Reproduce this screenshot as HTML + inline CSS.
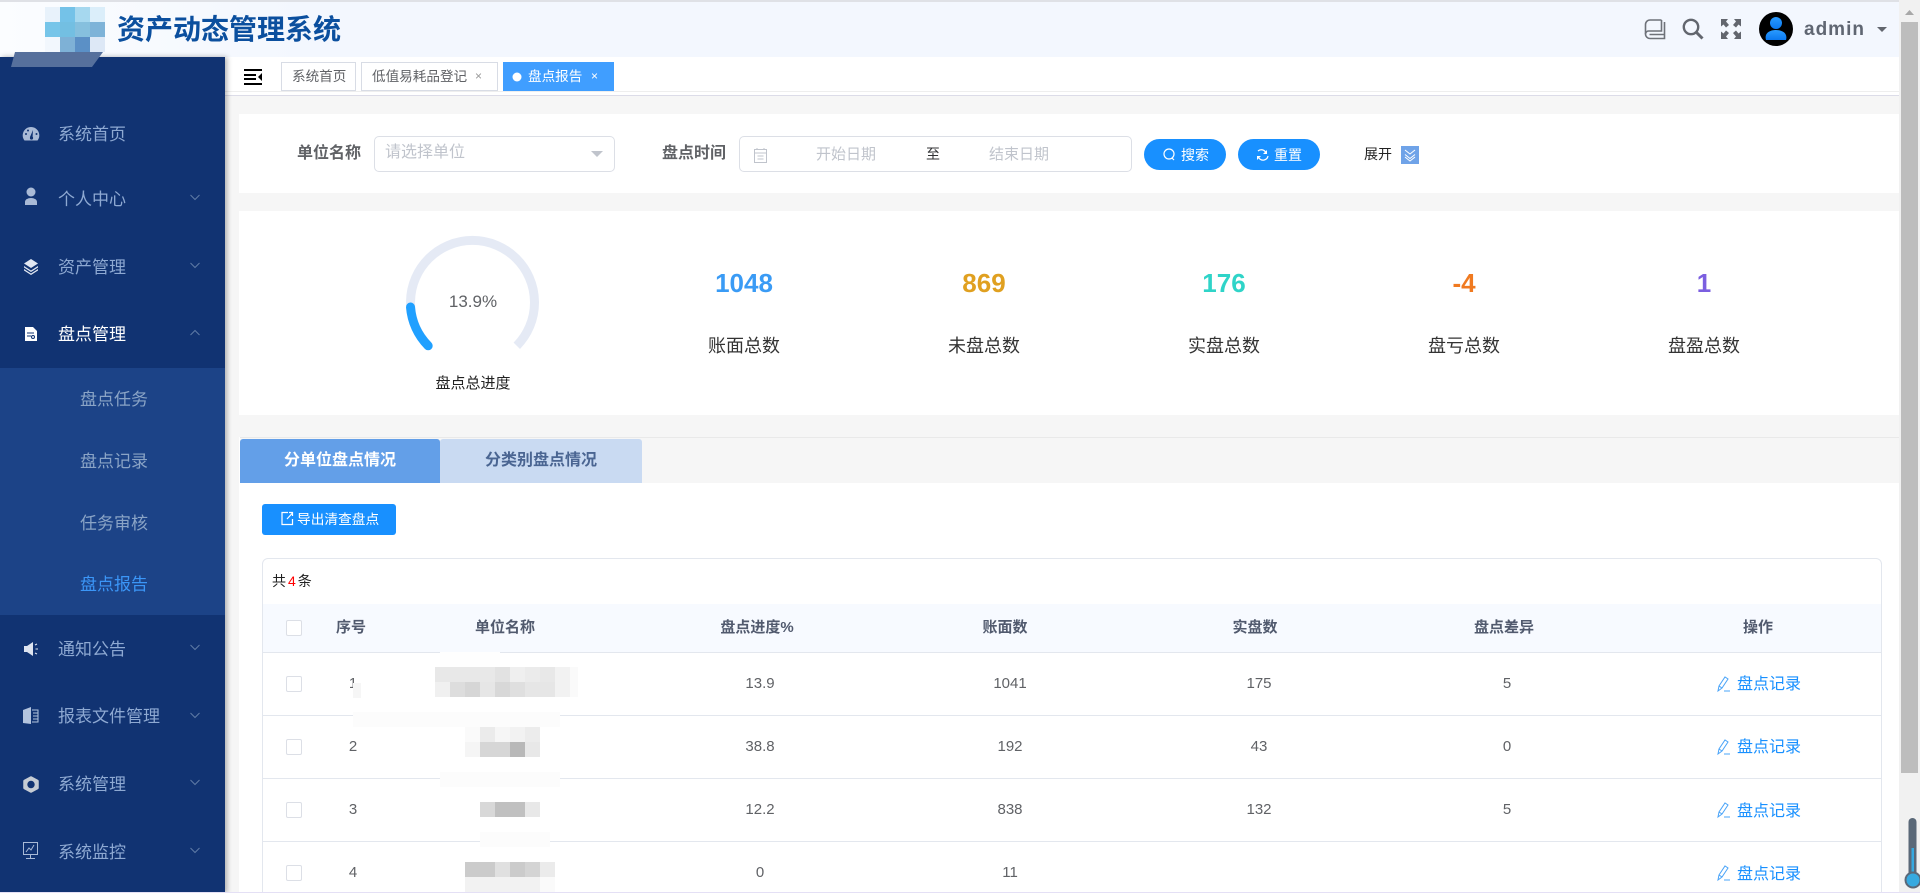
<!DOCTYPE html>
<html lang="zh-CN"><head><meta charset="utf-8"><title>资产动态管理系统</title>
<style>
html,body{margin:0;padding:0;width:1920px;height:893px;overflow:hidden;background:#f6f6f6;font-family:"Liberation Sans","Noto Sans CJK SC",sans-serif}
#w{position:absolute;left:0;top:0;width:1920px;height:893px;overflow:hidden;background:#f6f6f6}
.a{position:absolute;white-space:nowrap;line-height:1}
.box{position:absolute;box-sizing:border-box}
.c{transform:translateX(-50%)}
.m{font-size:17px;color:#8ea9d2;left:58px}
.s{font-size:17px;color:#8aa4c6;left:80px}
.v{font-size:15px;color:#606266}
.h{font-size:15px;font-weight:bold;color:#515a6e}
.l{font-size:16px;color:#1890ff;left:1737px}
.n{font-size:26px;font-weight:bold}
.t{font-size:18px;color:#333}
.tab{font-size:13.6px;color:#606266}
</style></head><body><div id="w">
<!-- header -->
<div class="box" style="left:0;top:0;width:1899px;height:57px;background:linear-gradient(90deg,#fbfdff,#f3f7fe 300px);border-top:2px solid #dfe1e6;box-shadow:0 1px 3px rgba(0,0,0,.12)"></div>
<!-- tab bar -->
<div class="box" style="left:225px;top:57px;width:1674px;height:39px;background:#fff;border-bottom:1px solid #dcdce8"></div>
<div class="box" style="left:225px;top:91px;width:1674px;height:1px;background:#eee"></div>
<!-- sidebar -->
<div class="box" style="left:0;top:57px;width:225px;height:836px;background:#113372;box-shadow:2px 0 5px rgba(0,0,0,.3)"></div>
<div class="box" style="left:0;top:368px;width:225px;height:247px;background:#1c4387"></div>
<!-- panels -->
<div class="box" style="left:239px;top:114px;width:1660px;height:79px;background:#fff"></div>
<div class="box" style="left:239px;top:211px;width:1660px;height:204px;background:#fff"></div>
<div class="box" style="left:239px;top:437px;width:1660px;height:456px;background:#fff"></div>
<div class="box" style="left:240px;top:437px;width:1659px;height:46px;background:#f6f6f6;border-top:1px solid #e9e9e9"></div>
<div class="box" style="left:240px;top:439px;width:200px;height:44px;background:#639fe8;border-radius:3px 3px 0 0"></div>
<div class="box" style="left:440px;top:439px;width:202px;height:44px;background:#c9daf2;border-radius:3px 3px 0 0"></div>
<!-- scrollbar -->
<div class="box" style="left:1899px;top:0;width:21px;height:893px;background:#f1f1f1"></div>
<div class="box" style="left:1901px;top:22px;width:17px;height:751px;background:#bdbdbd"></div>
<!-- search inputs -->
<div class="box" style="left:374px;top:136px;width:241px;height:36px;border:1px solid #dcdfe6;border-radius:5px;background:#fff"></div>
<div class="box" style="left:739px;top:136px;width:393px;height:36px;border:1px solid #dcdfe6;border-radius:5px;background:#fff"></div>
<div class="box" style="left:1144px;top:139px;width:82px;height:31px;border-radius:16px;background:#1890ff"></div>
<div class="box" style="left:1238px;top:139px;width:82px;height:31px;border-radius:16px;background:#1890ff"></div>
<div class="box" style="left:1401px;top:146px;width:18px;height:18px;background:#6fa3e8"></div>
<!-- tabs -->
<div class="box tabb" style="left:281px;top:62px;width:75px;height:29px;border:1px solid #d8dce5;background:#fff"></div>
<div class="box" style="left:361px;top:62px;width:137px;height:29px;border:1px solid #d8dce5;background:#fff"></div>
<div class="box" style="left:503px;top:62px;width:111px;height:29px;background:#409eff"></div>
<!-- export -->
<div class="box" style="left:262px;top:504px;width:134px;height:31px;background:#1890ff;border-radius:3px"></div>
<!-- table -->
<div class="box" style="left:262px;top:558px;width:1620px;height:360px;border:1px solid #e3e7ee;border-radius:6px;background:#fff"></div>
<div class="box" style="left:263px;top:604px;width:1618px;height:49px;background:#f7faff;border-bottom:1px solid #e3e7ee"></div>
<div class="box" style="left:263px;top:715px;width:1618px;height:1px;background:#e3e7ee"></div>
<div class="box" style="left:263px;top:778px;width:1618px;height:1px;background:#e3e7ee"></div>
<div class="box" style="left:263px;top:841px;width:1618px;height:1px;background:#e3e7ee"></div>
<div class="box" style="left:286px;top:620px;width:16px;height:16px;border:1px solid #dcdfe6;border-radius:2px;background:#fff"></div>
<div class="box" style="left:286px;top:676px;width:16px;height:16px;border:1px solid #dcdfe6;border-radius:2px;background:#fff"></div>
<div class="box" style="left:286px;top:739px;width:16px;height:16px;border:1px solid #dcdfe6;border-radius:2px;background:#fff"></div>
<div class="box" style="left:286px;top:802px;width:16px;height:16px;border:1px solid #dcdfe6;border-radius:2px;background:#fff"></div>
<div class="box" style="left:286px;top:865px;width:16px;height:16px;border:1px solid #dcdfe6;border-radius:2px;background:#fff"></div>

<!-- text -->
<div class="a" style="left:117px;top:16px;font-size:28px;font-weight:bold;color:#0b4f9e">资产动态管理系统</div>
<div class="a" style="left:1804px;top:20px;font-size:19px;font-weight:bold;color:#5f6672;letter-spacing:1px">admin</div>

<div class="a m" style="top:126px">系统首页</div>
<div class="a m" style="top:191px">个人中心</div>
<div class="a m" style="top:259px">资产管理</div>
<div class="a m" style="top:326px;color:#fff">盘点管理</div>
<div class="a s" style="top:391px">盘点任务</div>
<div class="a s" style="top:453px">盘点记录</div>
<div class="a s" style="top:515px">任务审核</div>
<div class="a s" style="top:576px;color:#3b96f7">盘点报告</div>
<div class="a m" style="top:641px">通知公告</div>
<div class="a m" style="top:708px">报表文件管理</div>
<div class="a m" style="top:776px">系统管理</div>
<div class="a m" style="top:844px">系统监控</div>

<div class="a tab" style="left:292px;top:70px">系统首页</div>
<div class="a tab" style="left:372px;top:70px">低值易耗品登记</div>
<div class="a" style="left:475px;top:70px;font-size:12px;color:#999">×</div>
<div class="a tab" style="left:528px;top:70px;color:#fff">盘点报告</div>
<div class="a" style="left:591px;top:70px;font-size:12px;color:#fff">×</div>

<div class="a" style="left:297px;top:146px;font-size:16px;font-weight:bold;color:#606266">单位名称</div>
<div class="a" style="left:385px;top:145px;font-size:16px;color:#c0c4cc">请选择单位</div>
<div class="a" style="left:662px;top:146px;font-size:16px;font-weight:bold;color:#606266">盘点时间</div>
<div class="a" style="left:816px;top:147px;font-size:15px;color:#c0c4cc">开始日期</div>
<div class="a c" style="left:933px;top:147px;font-size:14px;color:#303133">至</div>
<div class="a" style="left:989px;top:147px;font-size:15px;color:#c0c4cc">结束日期</div>
<div class="a" style="left:1181px;top:148px;font-size:14px;color:#fff">搜索</div>
<div class="a" style="left:1274px;top:148px;font-size:14px;color:#fff">重置</div>
<div class="a" style="left:1364px;top:147px;font-size:14px;color:#222">展开</div>

<div class="a c" style="left:473px;top:293px;font-size:17px;color:#606266">13.9%</div>
<div class="a c" style="left:473px;top:376px;font-size:15px;color:#222">盘点总进度</div>
<div class="a n c" style="left:744px;top:270px;color:#3a9bf5">1048</div>
<div class="a n c" style="left:984px;top:270px;color:#e0a020">869</div>
<div class="a n c" style="left:1224px;top:270px;color:#2fd4c8">176</div>
<div class="a n c" style="left:1464px;top:270px;color:#f07a20">-4</div>
<div class="a n c" style="left:1704px;top:270px;color:#7b5fe0">1</div>
<div class="a t c" style="left:744px;top:337px">账面总数</div>
<div class="a t c" style="left:984px;top:337px">未盘总数</div>
<div class="a t c" style="left:1224px;top:337px">实盘总数</div>
<div class="a t c" style="left:1464px;top:337px">盘亏总数</div>
<div class="a t c" style="left:1704px;top:337px">盘盈总数</div>

<div class="a c" style="left:340px;top:453px;font-size:16px;font-weight:bold;color:#fff">分单位盘点情况</div>
<div class="a c" style="left:541px;top:453px;font-size:16px;font-weight:bold;color:#4a6592">分类别盘点情况</div>
<div class="a" style="left:297px;top:513px;font-size:13.7px;color:#fff">导出清查盘点</div>
<div class="a" style="left:272px;top:574px;font-size:14px;color:#222">共<span style="color:#f00;margin:0 2px">4</span>条</div>

<div class="a h c" style="left:351px;top:620px">序号</div>
<div class="a h c" style="left:505px;top:620px">单位名称</div>
<div class="a h c" style="left:757px;top:620px">盘点进度%</div>
<div class="a h c" style="left:1005px;top:620px">账面数</div>
<div class="a h c" style="left:1255px;top:620px">实盘数</div>
<div class="a h c" style="left:1504px;top:620px">盘点差异</div>
<div class="a h c" style="left:1758px;top:620px">操作</div>

<div class="a v c" style="left:353px;top:676px">1</div>
<div class="a v c" style="left:760px;top:676px">13.9</div>
<div class="a v c" style="left:1010px;top:676px">1041</div>
<div class="a v c" style="left:1259px;top:676px">175</div>
<div class="a v c" style="left:1507px;top:676px">5</div>
<div class="a l" style="top:677px">盘点记录</div>
<div class="a v c" style="left:353px;top:739px">2</div>
<div class="a v c" style="left:760px;top:739px">38.8</div>
<div class="a v c" style="left:1010px;top:739px">192</div>
<div class="a v c" style="left:1259px;top:739px">43</div>
<div class="a v c" style="left:1507px;top:739px">0</div>
<div class="a l" style="top:740px">盘点记录</div>
<div class="a v c" style="left:353px;top:802px">3</div>
<div class="a v c" style="left:760px;top:802px">12.2</div>
<div class="a v c" style="left:1010px;top:802px">838</div>
<div class="a v c" style="left:1259px;top:802px">132</div>
<div class="a v c" style="left:1507px;top:802px">5</div>
<div class="a l" style="top:804px">盘点记录</div>
<div class="a v c" style="left:353px;top:865px">4</div>
<div class="a v c" style="left:760px;top:865px">0</div>
<div class="a v c" style="left:1010px;top:865px">11</div>
<div class="a l" style="top:867px">盘点记录</div>

<svg class="box" style="left:0;top:0" width="1920" height="893" viewBox="0 0 1920 893">
<!-- logo -->
<g shape-rendering="crispEdges">
<rect x="45" y="7" width="15" height="15" fill="#e8f2fb"/><rect x="60" y="7" width="15" height="15" fill="#74c2e8"/><rect x="75" y="7" width="15" height="15" fill="#a6d8ef"/><rect x="90" y="7" width="15" height="15" fill="#dbeefa"/>
<rect x="45" y="22" width="15" height="15" fill="#76c5e9"/><rect x="60" y="22" width="15" height="15" fill="#73bfe2"/><rect x="75" y="22" width="15" height="15" fill="#86c0de"/><rect x="90" y="22" width="15" height="15" fill="#7eb3d8"/>
<rect x="45" y="37" width="15" height="15" fill="#f2f7fd"/><rect x="60" y="37" width="15" height="15" fill="#7eb1d6"/><rect x="75" y="37" width="15" height="15" fill="#5b90c6"/><rect x="90" y="37" width="15" height="15" fill="#dde8f6"/>
</g>
<path d="M15 52H103L92 67H11Z" fill="#56709c"/>
<!-- header icons -->
<g fill="none" stroke="#6e7279" stroke-width="1.600">
<path d="M1661.500 20H1650a4.500 4.500 0 0 0-4.500 4.500V34a4.500 4.500 0 0 0 4.500 4.500H1664.500V22"/>
<path d="M1645.500 34a3 3 0 0 1 3-3H1661.500V20M1649.500 34.500H1664.500"/>
</g>
<g fill="none" stroke="#62666e">
<circle cx="1691" cy="27" r="7.200" stroke-width="2.400"/><path d="M1696.500 32.500L1702.500 38.500" stroke-width="3"/>
</g>
<g fill="#62666e">
<path d="M1721 19H1728L1726 21.500 1729 25 1726 27.500 1723.500 24.500 1721 26.500ZM1741 19H1734L1736 21.500 1733 25 1736 27.500 1738.500 24.500 1741 26.500ZM1721 39H1728L1726 36.500 1729 33 1726 30.500 1723.500 33.500 1721 31.500ZM1741 39H1734L1736 36.500 1733 33 1736 30.500 1738.500 33.500 1741 31.500Z"/>
<path d="M1877 27H1887L1882 32Z"/>
</g>
<circle cx="1776" cy="29" r="17" fill="#000"/>
<defs><linearGradient id="u" x1="0" y1="0" x2="0" y2="1"><stop offset="0" stop-color="#2a9bff"/><stop offset="1" stop-color="#0a78f0"/></linearGradient></defs>
<circle cx="1776" cy="23" r="6" fill="url(#u)"/><path d="M1766 40C1764 33 1770 30 1776 30S1788 33 1786 40Z" fill="url(#u)"/>
<!-- hamburger -->
<g fill="#000"><rect x="244" y="69" width="18" height="2"/><rect x="244" y="74" width="12" height="2"/><rect x="244" y="78" width="12" height="2"/><rect x="244" y="83" width="18" height="2"/><path d="M262 73V81L258 77Z"/></g>
<!-- tab dot -->
<circle cx="517" cy="77" r="4.500" fill="#fff"/>
<!-- sidebar icons -->
<g fill="#a9bad6">
<path d="M24.500 140.500A8.300 8.300 0 1 1 37.500 140.500Z"/>
<circle cx="31" cy="192" r="4.500"/><path d="M25 205v-3a6 4 0 0 1 12 0v3Z"/>
</g>
<path d="M30 137L33 130 32.500 138Z" fill="#113372"/><circle cx="31.500" cy="138" r="1.600" fill="#113372"/>
<circle cx="26" cy="134" r="1" fill="#113372"/><circle cx="36.500" cy="134" r="1" fill="#113372"/><circle cx="28" cy="130.500" r="1" fill="#113372"/>
<g fill="#e1e7f2"><path d="M31 259L38 263.500 31 268 24 263.500Z"/><path d="M24 266L31 270.500 38 266V267.500L31 272 24 267.500Z"/><path d="M24 269L31 273.500 38 269V270.500L31 275 24 270.500Z"/></g>
<path d="M25 327H33L37 331V341H25Z" fill="#fff"/><g stroke="#113372" fill="none"><path d="M27 333H34M27 336H31"/><circle cx="33" cy="337" r="1.500"/></g>
<g fill="#dde4f0"><path d="M24 646H27L33 642V656L27 652H24Z"/><path d="M35 645l2-1M35.500 649H38M35 653l2 1" stroke="#dde4f0" fill="none"/></g>
<path d="M23 710L31 707V724L23 723Z" fill="#b3c4de"/><g stroke="#b3c4de" fill="none"><path d="M32 710H38V722H32M33 713H38M33 716H38M33 719H38"/></g>
<path d="M31 777.500L37.500 781V788L31 791.500 24.500 788V781Z" fill="#c6ccd4" stroke="#c6ccd4" stroke-width="2.500" stroke-linejoin="round"/><circle cx="31" cy="784.500" r="3.700" fill="#113372"/>
<g fill="none" stroke="#a9bad6"><path d="M23.500 842.500H37.500V854.500H23.500ZM30.500 855V858.500M26 858.500H35M26 852l3-4 2 2 3-5"/></g>
<!-- chevrons -->
<g fill="none" stroke="#5f7ba6" stroke-width="1">
<path d="M190.500 195L195 199.500 199.500 195M190.500 263L195 267.500 199.500 263M190.500 645L195 649.500 199.500 645M190.500 713L195 717.500 199.500 713M190.500 780L195 784.500 199.500 780M190.500 848L195 852.500 199.500 848M190.500 335L195 330.500 199.500 335"/>
</g>
<!-- select arrow -->
<path d="M591 151H603L597 157Z" fill="#c0c4cc"/>
<!-- calendar -->
<g fill="none" stroke="#c0c4cc"><path d="M754.500 149.500H766.500V162.500H754.500ZM754.500 153H766.500M757.500 156H763.500M757.500 159H763.500M757 148V150M764 148V150"/></g>
<!-- search btn icons -->
<g fill="none" stroke="#fff" stroke-width="1.200"><circle cx="1169" cy="154" r="5"/><path d="M1172 158L1174 160"/>
<path d="M1258 151a5 5 0 0 1 8 2M1268 156a5 5 0 0 1-9 2"/></g>
<path d="M1267 150V154H1263ZM1257 160V156H1261Z" fill="#fff"/>
<!-- expand chevrons -->
<g fill="none" stroke="#fff"><path d="M1405 150L1410 154 1415 150M1405 154.500L1410 158.500 1415 154.500"/><path d="M1405 157L1410 161 1415 157"/></g>
<!-- gauge -->
<path d="M428.200 345.800A62 62 0 1 1 516.800 345.800" fill="none" stroke="#e5eaf5" stroke-width="9"/>
<path d="M428.200 345.800A62 62 0 0 1 410.500 307" fill="none" stroke="#20a0ff" stroke-width="9" stroke-linecap="round"/>
<!-- export icon -->
<g fill="none" stroke="#fff" stroke-width="1.200"><path d="M288 512.500H282V524.500H292.500V519M287 519L292.500 513M289 512.500H292.500V516"/></g>
<!-- pencil icons -->
<g fill="none" stroke="#4aa4f8"><path d="M1718 691l1-5 6-9 3 2-6 9ZM1719 686l3 2M1724 691H1730"/></g>
<g fill="none" stroke="#4aa4f8"><path d="M1718 754l1-5 6-9 3 2-6 9ZM1719 749l3 2M1724 754H1730"/><path d="M1718 817l1-5 6-9 3 2-6 9ZM1719 812l3 2M1724 817H1730"/><path d="M1718 880l1-5 6-9 3 2-6 9ZM1719 875l3 2M1724 880H1730"/></g>
<!-- mosaics -->
<g shape-rendering="crispEdges">
<rect x="440" y="652" width="60" height="15" fill="#fefefe"/>
<rect x="353" y="683" width="8" height="15" fill="#f6f6f6"/>
<rect x="353" y="712" width="207" height="15" fill="#fcfcfc"/><rect x="440" y="772" width="120" height="15" fill="#fcfcfc"/><rect x="480" y="832" width="70" height="15" fill="#fcfcfc"/>
<rect x="570" y="667" width="8" height="30" fill="#fafafa"/>
<rect x="435" y="667" width="60" height="15" fill="#e8e8e8"/><rect x="495" y="667" width="15" height="15" fill="#e2e2e2"/><rect x="510" y="667" width="15" height="15" fill="#efefef"/><rect x="525" y="667" width="15" height="15" fill="#ebebeb"/><rect x="540" y="667" width="15" height="15" fill="#e8e8e8"/><rect x="555" y="667" width="15" height="15" fill="#f2f2f2"/>
<rect x="435" y="682" width="15" height="15" fill="#f0f0f0"/><rect x="450" y="682" width="15" height="15" fill="#ddd"/><rect x="465" y="682" width="15" height="15" fill="#d6d6d6"/><rect x="480" y="682" width="15" height="15" fill="#e6e6e6"/><rect x="495" y="682" width="15" height="15" fill="#d8d8d8"/><rect x="510" y="682" width="15" height="15" fill="#dfdfdf"/><rect x="525" y="682" width="30" height="15" fill="#e6e6e6"/><rect x="555" y="682" width="15" height="15" fill="#f2f2f2"/>
<rect x="465" y="727" width="15" height="15" fill="#fafafa"/><rect x="480" y="727" width="15" height="15" fill="#ebebeb"/><rect x="495" y="727" width="15" height="15" fill="#f6f6f6"/><rect x="510" y="727" width="15" height="15" fill="#f2f2f2"/><rect x="525" y="727" width="15" height="15" fill="#ececec"/>
<rect x="465" y="742" width="15" height="15" fill="#f5f5f5"/><rect x="480" y="742" width="30" height="15" fill="#d6d6d6"/><rect x="510" y="742" width="15" height="15" fill="#b8b8b8"/><rect x="525" y="742" width="15" height="15" fill="#e8e8e8"/>
<rect x="480" y="802" width="15" height="15" fill="#d8d8d8"/><rect x="495" y="802" width="30" height="15" fill="#c0c0c0"/><rect x="525" y="802" width="15" height="15" fill="#e8e8e8"/>
<rect x="465" y="862" width="30" height="15" fill="#cbcbcb"/><rect x="495" y="862" width="15" height="15" fill="#e0e0e0"/><rect x="510" y="862" width="15" height="15" fill="#cbcbcb"/><rect x="525" y="862" width="15" height="15" fill="#d4d4d4"/><rect x="540" y="862" width="15" height="15" fill="#ebebeb"/>
<rect x="465" y="877" width="75" height="15" fill="#f2f2f2"/><rect x="540" y="877" width="15" height="15" fill="#fafafa"/>
</g>
<!-- scrollbar arrow + thermometer -->
<path d="M1905 15L1909.500 10 1914 15Z" fill="#a8a8a8"/>
<rect x="1908.500" y="818" width="8" height="60" rx="4" fill="#5a6878"/>
<rect x="1911.500" y="848" width="2.500" height="28" fill="#36a9e0"/>
<circle cx="1913" cy="880" r="7.500" fill="#36a9e0" stroke="#5a6878" stroke-width="2"/>
<rect x="0" y="892" width="1920" height="1" fill="#e4e0f5"/>
</svg>
</div></body></html>
